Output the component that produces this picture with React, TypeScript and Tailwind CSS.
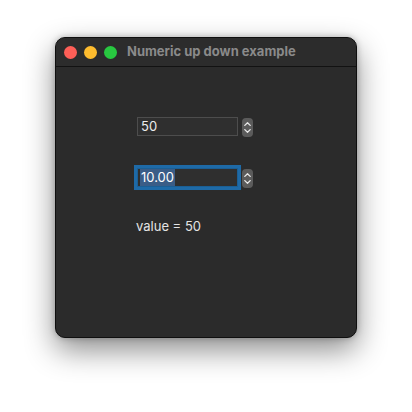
import { useState } from "react";

function Spinner({ top }: { top: string }) {
  return (
    <div className={`ml-[4px] ${top} flex h-[19px] w-[11px] flex-col items-center justify-center gap-[3px] rounded-[4px] bg-[#5b5b5b]`}>
      <svg width="7" height="4" viewBox="0 0 7 4" fill="none">
        <path d="M0.8 3.4 L3.5 0.8 L6.2 3.4" stroke="#e8e8e8" strokeWidth="1.3" strokeLinecap="round" strokeLinejoin="round" />
      </svg>
      <svg width="7" height="4" viewBox="0 0 7 4" fill="none">
        <path d="M0.8 0.6 L3.5 3.2 L6.2 0.6" stroke="#e8e8e8" strokeWidth="1.3" strokeLinecap="round" strokeLinejoin="round" />
      </svg>
    </div>
  );
}

export default function App() {
  const [value] = useState(50);

  return (
    <div
      className="h-[412px] w-[412px] bg-white pl-[55px] pt-[37px]"
      style={{ fontFamily: "Inter, 'Liberation Sans', sans-serif" }}
    >
      <div className="flex h-[301px] w-[302px] flex-col overflow-hidden rounded-[10px] border border-[#0f0f0f] bg-[#2b2b2b] shadow-[0_12px_30px_rgba(0,0,0,0.45),0_0_6px_rgba(0,0,0,0.25)]">
        {/* Title bar */}
        <div className="flex h-[29px] items-center border-b border-[#121212] bg-[#2c2c2c] pl-[8px]">
          <div className="flex gap-[7px]">
            <span className="h-[13px] w-[13px] rounded-full bg-[#fe5f57]" />
            <span className="h-[13px] w-[13px] rounded-full bg-[#febc2e]" />
            <span className="h-[13px] w-[13px] rounded-full bg-[#28c840]" />
          </div>
          <span className="ml-[10px] text-[13px] font-bold text-[#8a8a8a]">
            Numeric up down example
          </span>
        </div>

        {/* Content */}
        <div className="flex flex-col pl-[81px] pt-[50px]">
          <div className="flex items-start">
            <div className="flex h-[19px] w-[101px] items-center border border-[#4d4d4d] bg-[#2f2f2f] pl-[3px] text-[13px] text-[#ececec]">
              {value}
            </div>
            <Spinner top="mt-[1px]" />
          </div>

          <div className="mt-[31px] flex items-start">
            <div className="flex h-[19px] w-[101px] items-center border border-[#1b5f95] bg-[#2f2f2f] pl-[2px] text-[13px] text-white ring-[3px] ring-[#1e6aa7]">
              <span className="bg-[#3a5d87] px-[1px] leading-[17px]">10.00</span>
            </div>
            <Spinner top="mt-[1px]" />
          </div>

          <div className="-ml-[1px] mt-[29px] text-[13px] text-[#e4e4e4]">
            value = {value}
          </div>
        </div>
      </div>
    </div>
  );
}
